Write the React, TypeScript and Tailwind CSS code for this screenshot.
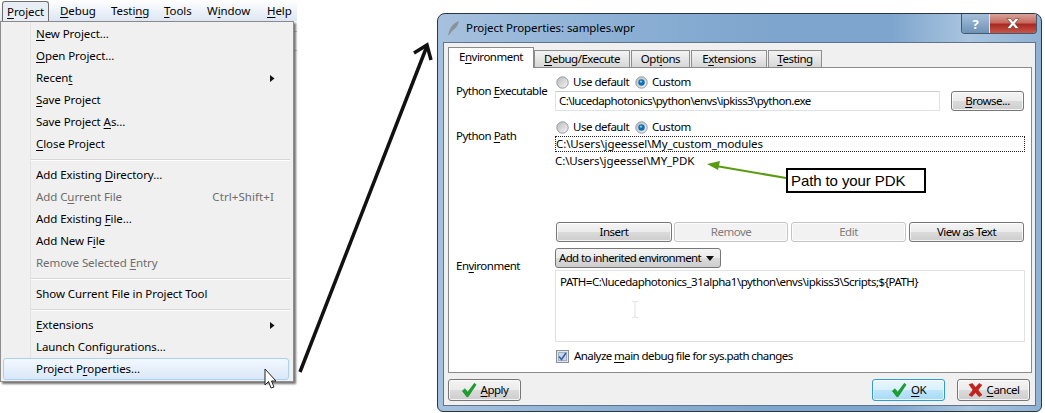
import React from "react";

function M({ t }: { t: string }) {
  const i = t.indexOf("&");
  if (i < 0) return <span>{t}</span>;
  return (
    <span>
      {t.slice(0, i)}
      <u className="underline underline-offset-2 decoration-1">{t[i + 1]}</u>
      {t.slice(i + 2)}
    </span>
  );
}

function Sep() {
  return (
    <div className="h-[9px] ml-[30px] mr-[3px] flex flex-col justify-center">
      <div className="h-px bg-[#d7d7d7]" />
      <div className="h-px bg-white" />
    </div>
  );
}

function Item({ t, off, sub, hint, hot }: { t: string; off?: boolean; sub?: boolean; hint?: string; hot?: boolean }) {
  return (
    <div
      className={
        "relative h-[22px] flex items-center " +
        (off ? "text-[#6d6d6d] " : "text-black ") +
        (hot
          ? "ml-[2px] mr-[4px] pl-[32px] pr-[14px] rounded-[3px] border border-[#a9d1f7] bg-gradient-to-b from-[#f3f8fd] to-[#dae8f8]"
          : "pl-[35px] pr-[18px]")
      }
    >
      <span className="whitespace-nowrap">
        <M t={t} />
      </span>
      <span className="ml-auto flex items-center">
        {hint && <span className="text-[#6d6d6d] mr-[1px] tracking-[0.08px]">{hint}</span>}
        {sub && (
          <svg width="5" height="7" viewBox="0 0 5 7">
            <path d="M0 0L4.5 3.5L0 7Z" fill="#111" />
          </svg>
        )}
      </span>
    </div>
  );
}

function WinBtn({ w, children, off, def }: { w: string; children: React.ReactNode; off?: boolean; def?: boolean }) {
  const tone = off
    ? "border-[#c4c4c4] text-[#7d7d7d] bg-[#f2f2f2]"
    : def
      ? "border-[#2f9bd3] text-black bg-[linear-gradient(#eaf6fd_0%,#d9f0fc_50%,#bee6fd_50%,#a7d9f5_100%)]"
      : "border-[#777] text-black bg-[linear-gradient(#f4f4f4_0%,#ebebeb_50%,#dbdbdb_50%,#cdcdcd_100%)]";
  return (
    <div className={`${w} h-full shrink-0 flex items-center justify-center rounded-[3px] border shadow-[inset_0_0_0_1px_rgba(255,255,255,0.75)] ${tone}`}>
      {children}
    </div>
  );
}

function Radio({ on }: { on?: boolean }) {
  return (
    <svg width="13" height="13" viewBox="0 0 13 13" className="shrink-0">
      <defs>
        <linearGradient id="rg" x1="0" y1="0" x2="1" y2="1">
          <stop offset="0" stopColor="#b9b9b9" />
          <stop offset="1" stopColor="#f6f6f6" />
        </linearGradient>
      </defs>
      <circle cx="6.5" cy="6.5" r="5.7" fill="url(#rg)" stroke="#8f9aa5" />
      {on && <circle cx="6.5" cy="6.5" r="3.2" fill="#0f6fb0" />}
      {on && <circle cx="6" cy="5.6" r="1.2" fill="#7cc6ee" />}
    </svg>
  );
}

function Radios() {
  return (
    <div className="h-[14px] flex items-center">
      <span className="ml-[1px]"><Radio /></span>
      <span className="ml-[4px] w-[62px] whitespace-nowrap">Use default</span>
      <Radio on />
      <span className="ml-[4px]">Custom</span>
    </div>
  );
}

function Check({ s = 16 }: { s?: number }) {
  return (
    <svg width={s} height={s} viewBox="0 0 18 18" className="shrink-0">
      <path d="M1.5 10L4.5 7.5L7.5 11.5L15 1.5L17 3L8 16.5H6.5Z" fill="#17a32a" stroke="#0c7f1c" strokeWidth="0.6" />
    </svg>
  );
}

function Cross() {
  return (
    <svg width="15" height="14" viewBox="0 0 15 14" className="shrink-0">
      <path d="M1 1.5L4.5 0.5L7.5 4.5L11 0.5L14 2L10 7L14 12L11 13.5L7.5 9.5L4 13.5L1 12L5 7Z" fill="#c8201c" stroke="#9c1512" strokeWidth="0.5" />
    </svg>
  );
}

export default function App() {
  const bar = ["&Debug", "Testi&ng", "&Tools", "W&indow", "&Help"];
  const barW = ["w-[51px]", "w-[53px]", "w-[43px]", "w-[60px]", "w-[30px]"];
  return (
    <div className="relative w-[1045px] h-[413px] overflow-hidden bg-white flex items-start text-[11.5px] tracking-[-0.08px] leading-[16px] text-black font-['Noto_Sans',sans-serif]">
      {/* left: the menu */}
      <div className="relative w-[297px] shrink-0">
        <div className="h-[21px] flex items-center pl-[2px] bg-gradient-to-b from-white to-[#dde6f3]">
          <div className="w-[49px] h-[20px] mt-[1px] flex items-center justify-center rounded-t-[3px] border border-b-0 border-[#6e6e6e] bg-[#e9eef6]">
            <M t="&Project" />
          </div>
          <div className="flex ml-[11px]">
            {bar.map((b, i) => (
              <span key={b} className={barW[i] + " whitespace-nowrap"}>
                <M t={b} />
              </span>
            ))}
          </div>
        </div>
        <div className="absolute right-0 top-[31px] w-[3px] h-px bg-[#c8c8c8]" />
        <div className="absolute right-0 top-[50px] w-[3px] h-px bg-[#c8c8c8]" />
        <div className="relative w-[294px] h-[361px] bg-[#f0f0f0] border border-t-[#8a8a8a] border-[#8e8e8e] pt-[1px] shadow-[2px_2px_2px_rgba(70,70,70,0.75)]">
          <div className="absolute left-[29px] top-0 bottom-0 w-px bg-[#e2e3e3]" />
          <Item t="&New Project..." />
          <Item t="&Open Project..." />
          <Item t="Recen&t" sub />
          <Item t="&Save Project" />
          <Item t="Save Project &As..." />
          <Item t="&Close Project" />
          <Sep />
          <Item t="Add Existing &Directory..." />
          <Item t="Add C&urrent File" off hint="Ctrl+Shift+I" />
          <Item t="Add Existing &File..." />
          <Item t="Add New F&ile" />
          <Item t="Remove Selected &Entry" off />
          <Sep />
          <Item t="Show Current File in Project Tool" />
          <Sep />
          <Item t="&Extensions" sub />
          <Item t="Launch Configurations..." />
          <Item t="Project P&roperties..." hot />
        </div>
      </div>

      {/* right: the dialog */}
      <div className="ml-[140px] mt-[13px] w-[605px] h-[399px] shrink-0 flex flex-col rounded-t-[8px] rounded-b-[6px] border border-[#2a3642] bg-[linear-gradient(90deg,#a6c1dd,#8fb2d6_25%,#7ea5cd_55%,#7ea5cd_75%,#a9c5df_88%,#8fb1d3)] px-[5px] pb-[5px]">
        <div className="h-[28px] flex items-start shrink-0">
          <div className="h-[28px] flex items-center">
            <svg width="14" height="16" viewBox="0 0 14 16" className="ml-[4px]">
              <path d="M1 15L3 9Q6 3 12 1Q11 7 5 11L2 15Z" fill="#8a9298" />
            </svg>
            <span className="ml-[5px] whitespace-nowrap">Project Properties: samples.wpr</span>
          </div>
          <div className="ml-auto mr-[-1px] h-[20px] flex rounded-b-[4px] border border-t-0 border-[#45586c] overflow-hidden">
            <div className="w-[28px] flex items-center justify-center border-r border-[#dfe8f2] bg-gradient-to-b from-[#a5bfda] to-[#6f92b6] text-white text-[13px] font-bold">?</div>
            <div className="w-[46px] flex items-center justify-center bg-[linear-gradient(#d8a49c_0%,#c76a5d_45%,#a82a20_55%,#c9564a_100%)]">
              <svg width="14" height="11" viewBox="0 0 14 11">
                <path d="M1 0.5H4.5L7 3.5L9.5 0.5H13L9 5.5L13 10.5H9.5L7 7.5L4.5 10.5H1L5 5.5Z" fill="#fff" stroke="#5c3a36" strokeWidth="0.6" />
              </svg>
            </div>
          </div>
        </div>

        <div className="flex-1 flex flex-col bg-[#f0f0f0] border border-[#5f7488] px-[4px] pt-[4px] tracking-[-0.5px]">
          {/* tabs */}
          <div className="flex items-end h-[20px] shrink-0">
            <div className="relative z-10 w-[86px] h-[21px] mb-[-1px] flex items-center justify-center bg-white border border-b-0 border-[#8a8a8a] pb-[2px]">
              <M t="E&nvironment" />
            </div>
            {[
              ["&Debug/Execute", "w-[96px]"],
              ["Opt&ions", "w-[59px]"],
              ["E&xtensions", "w-[76px]"],
              ["&Testing", "w-[54px]"],
            ].map(([t, w]) => (
              <div key={t} className={w + " h-[17px] flex items-center justify-center mr-[1px] border border-b-0 border-[#8f8f8f] bg-[linear-gradient(#f3f3f3,#e6e6e6_50%,#d6d6d6)]"}>
                <M t={t} />
              </div>
            ))}
          </div>
          {/* panel */}
          <div className="relative w-[584px] h-[306px] bg-white border border-[#8a8a8a] pl-[7px] pt-[7px]">
            <div className="flex h-[45px]">
              <div className="w-[99px] shrink-0 pt-[8px] whitespace-nowrap">
                <M t="Python &Executable" />
              </div>
              <div className="w-[470px]">
                <Radios />
                <div className="flex h-[20px] mt-[2px]">
                  <div className="w-[385px] shrink-0 flex items-center pl-[3px] border border-[#dfe3e8] border-t-[#c8ccd0] rounded-[1px] tracking-[-0.58px]">C:\lucedaphotonics\python\envs\ipkiss3\python.exe</div>
                  <div className="w-[11px] shrink-0" />
                  <WinBtn w="w-[73px]"><M t="&Browse..." /></WinBtn>
                </div>
              </div>
            </div>

            <div className="flex h-[102px]">
              <div className="w-[99px] shrink-0 pt-[8px] whitespace-nowrap">
                <M t="Python &Path" />
              </div>
              <div className="w-[470px]">
                <Radios />
                <div className="h-[16px] mt-[2px] flex items-center border border-dotted border-[#222] tracking-[-0.11px]">C:\Users\jgeessel\My_custom_modules</div>
                <div className="h-[16px] mt-[1px] flex items-center tracking-[-0.11px]">C:\Users\jgeessel\MY_PDK</div>
              </div>
            </div>

            <div className="flex">
              <div className="w-[99px] shrink-0 pt-[36px] whitespace-nowrap">
                <M t="En&vironment" />
              </div>
              <div className="w-[470px]">
                <div className="h-[20px] flex pr-[1px]">
                  <div className="ml-[1px]" />
                  <WinBtn w="w-[116px]">Insert</WinBtn>
                  <div className="w-[2px]" />
                  <WinBtn w="w-[114px]" off>Remove</WinBtn>
                  <div className="w-[3px]" />
                  <WinBtn w="w-[115px]" off>Edit</WinBtn>
                  <div className="w-[3px]" />
                  <WinBtn w="w-[115px]">View as Text</WinBtn>
                </div>
                <div className="h-[20px] mt-[6px] flex">
                  <div className="w-[166px] h-full flex items-center pl-[3px] rounded-[3px] border border-[#777] bg-[linear-gradient(#f4f4f4_0%,#ebebeb_50%,#dbdbdb_50%,#cdcdcd_100%)] whitespace-nowrap tracking-[-0.65px]">
                    Add to inherited environment
                    <svg width="8" height="5" viewBox="0 0 8 5" className="ml-auto mr-[6px]">
                      <path d="M0 0H8L4 5Z" fill="#111" />
                    </svg>
                  </div>
                </div>
                <div className="relative h-[72px] mt-[2px] border border-[#dfe3e8] px-[4px] pt-[3px] whitespace-nowrap tracking-[-0.5px]">
                  {"PATH=C:\\lucedaphotonics_31alpha1\\python\\envs\\ipkiss3\\Scripts;${PATH}"}
                  <svg width="8" height="17" viewBox="0 0 8 17" className="absolute left-[75px] top-[30px]">
                    <path d="M1 .5H3.5Q4 .5 4 2V15Q4 16.5 3.5 16.5H1M7 .5H4.5Q4 .5 4 2M4 15Q4 16.5 4.5 16.5H7" fill="none" stroke="#e3e3e3" />
                  </svg>
                </div>
                <div className="h-[14px] mt-[7px] flex items-center">
                  <svg width="13" height="13" viewBox="0 0 13 13" className="ml-[1px] shrink-0">
                    <rect x="0.5" y="0.5" width="12" height="12" fill="#dfe8f2" stroke="#8e8f8f" />
                    <rect x="2.5" y="2.5" width="8" height="8" fill="#c9d7e8" stroke="#9fb0c6" />
                    <path d="M3 6.5L5.5 9.5L10 3" fill="none" stroke="#3c5fa8" strokeWidth="1.6" />
                  </svg>
                  <span className="ml-[5px] whitespace-nowrap tracking-[-0.57px]"><M t="Analyze &main debug file for sys.path changes" /></span>
                </div>
              </div>
            </div>

            {/* callout over the list */}
            <div className="absolute left-[337px] top-[100px] w-[140px] h-[25px] flex items-center pl-[3px] bg-white border-2 border-black font-['Liberation_Sans',sans-serif] text-[15px] tracking-[-0.1px] whitespace-nowrap">
              Path to your PDK
            </div>
          </div>
          {/* bottom buttons */}
          <div className="h-[22px] mt-[6px] flex pr-[1px]">
            <WinBtn w="w-[73px]">
              <span className="flex items-center gap-[4px]"><Check /><M t="&Apply" /></span>
            </WinBtn>
            <div className="flex-1" />
            <WinBtn w="w-[73px]" def>
              <span className="flex items-center gap-[4px]"><Check /><M t="&OK" /></span>
            </WinBtn>
            <div className="w-[12px]" />
            <WinBtn w="w-[73px]">
              <span className="flex items-center gap-[4px]"><Cross /><M t="&Cancel" /></span>
            </WinBtn>
          </div>
        </div>
      </div>

      {/* annotations lying over everything */}
      <svg width="1045" height="413" viewBox="0 0 1045 413" className="absolute inset-0 pointer-events-none">
        <path d="M300 372L427 46" stroke="#111" strokeWidth="3.5" fill="none" />
        <path d="M414 53L427 45L431 60" stroke="#111" strokeWidth="3.5" fill="none" strokeLinejoin="miter" />
        <path d="M786 178L716 166" stroke="#5a9a10" strokeWidth="2" fill="none" />
        <path d="M707 164L720 161L718 170Z" fill="#5a9a10" />
        <path d="M265 369V385L268.5 381.5L271 388L274 387L271.5 381H276Z" fill="#fff" stroke="#222" strokeWidth="1" />
      </svg>
    </div>
  );
}
